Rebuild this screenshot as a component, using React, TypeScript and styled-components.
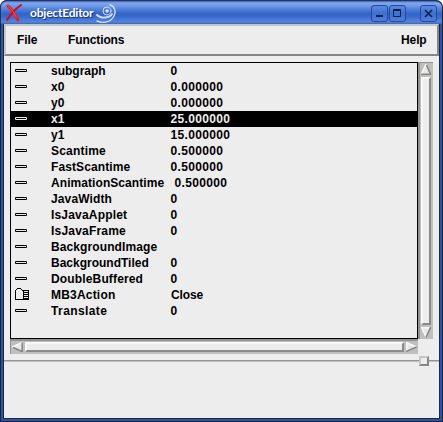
import React from 'react';
import styled, { createGlobalStyle } from 'styled-components';

const Global = createGlobalStyle`
  * { box-sizing: border-box; }
  body { margin: 0; background: #fff; overflow: hidden; }
  svg { display: block; flex: none; }
`;

const Frame = styled.div`
  width: 443px;
  height: 422px;
  display: flex;
  flex-direction: column;
  padding: 0 1px 1px 0;
  border-radius: 7px 7px 0 0;
  background: #20242c;
  font: bold 12px/16px 'Liberation Sans', Arial, sans-serif;
  color: #000;
`;

const TitleBar = styled.header`
  height: 24px;
  flex: none;
  display: flex;
  align-items: center;
  padding: 1px 5px 0 5px;
  border-top: 1px solid #23345c;
  border-left: 1px solid #23345c;
  border-radius: 7px 7px 0 0;
  background: linear-gradient(#3a62b4 0, #82a8ee 2px, #6e98e6 5px, #4a7bd6 9px, #3464c4 13px, #3a6ccc 16px, #5585dc 21px, #3564bc 23px);
`;

const Title = styled.span`
  flex: none;
  width: 66px;
  margin-left: 7px;
  font: bold 12px/20px Lato, sans-serif;
  letter-spacing: -0.2px;
  white-space: nowrap;
  color: #fff;
  text-shadow: 1px 1px 1px #12306c;
`;

const Controls = styled.div`
  display: flex;
  margin-left: auto;
  gap: 1px;
`;

const TitleButton = styled.button<{ $apart?: boolean }>`
  width: 17px;
  height: 17px;
  padding: 0;
  margin-left: ${(p) => (p.$apart ? 13 : 0)}px;
  border: 1px solid #2449a0;
  border-radius: 3px;
  background: linear-gradient(#5b8ae0, #3f6fce 50%, #4d80da);
`;

const Body = styled.main`
  flex: 1;
  display: flex;
  flex-direction: column;
  margin: 0 2px 2px 3px;
  border: solid #282828;
  border-width: 0 1px 1px 1px;
  background: #ededed;
  outline: 2px solid #2454b8;
  clip-path: inset(0 -2px -2px -2px);
`;

const MenuBar = styled.nav`
  height: 32px;
  flex: none;
  display: flex;
  align-items: center;
  padding: 0 10px 0 11px;
  border: 2px solid;
  border-color: #c6c6c6 #868686 #868686 #c6c6c6;
`;

const Text = styled.span<{ $w: number; $sp?: number }>`
  flex: none;
  width: ${(p) => p.$w}px;
  white-space: pre;
  letter-spacing: ${(p) => p.$sp ?? 0}px;
`;

const Spacer = styled.span`
  flex: 1;
`;

const Viewer = styled.section`
  display: grid;
  grid-template: 277px 15px / 408px 15px;
  margin: 6px 0 0 6px;
`;

const List = styled.div`
  border: 1px solid #000;
`;

const Row = styled.div<{ $selected?: boolean }>`
  height: 16px;
  display: flex;
  align-items: center;
  padding-left: 4px;
  background: ${(p) => (p.$selected ? '#000' : 'transparent')};
  color: ${(p) => (p.$selected ? '#ededed' : '#000')};
`;

const IconCell = styled.span`
  width: 36px;
  flex: none;
`;

const Track = styled.div<{ $vertical?: boolean }>`
  display: flex;
  flex-direction: ${(p) => (p.$vertical ? 'column' : 'row')};
  gap: 2px;
  padding: ${(p) => (p.$vertical ? '1px 2px 1px 1px' : '1px 1px 2px 1px')};
  border: 0 solid #929292;
  border-width: ${(p) => (p.$vertical ? '1px 0 0 2px' : '2px 0 0 1px')};
  background: #bfc0bd;
`;

const Thumb = styled.div`
  flex: 1;
  border: 2px solid;
  border-color: #f8f8f8 #8a8a8a #8a8a8a #f8f8f8;
  background: #ededed;
`;

const SashRow = styled.div`
  height: 10px;
  flex: none;
  display: flex;
  align-items: center;
  margin-top: 2px;
`;

const Rule = styled.div<{ $w?: number }>`
  height: 2px;
  flex: ${(p) => (p.$w ? `0 0 ${p.$w}px` : '1')};
  border-top: 1px solid #949494;
  border-bottom: 1px solid #c0c0c0;
`;

const Sash = styled.div`
  width: 10px;
  height: 10px;
  border: 2px solid;
  border-color: #c6c6c6 #868686 #868686 #c6c6c6;
`;

interface Property {
  name: string;
  value: string;
  spacing?: number;
  shift?: number;
}

const properties: Property[] = [
  { name: 'subgraph', value: '0' },
  { name: 'x0', value: '0.000000' },
  { name: 'y0', value: '0.000000' },
  { name: 'x1', value: '25.000000' },
  { name: 'y1', value: '15.000000' },
  { name: 'Scantime', value: '0.500000', spacing: 0.2 },
  { name: 'FastScantime', value: '0.500000', spacing: 0.1 },
  { name: 'AnimationScantime', value: '0.500000', spacing: 0.07, shift: 4 },
  { name: 'JavaWidth', value: '0', spacing: 0.12 },
  { name: 'IsJavaApplet', value: '0', spacing: 0.18 },
  { name: 'IsJavaFrame', value: '0', spacing: 0.2 },
  { name: 'BackgroundImage', value: '', spacing: 0.1 },
  { name: 'BackgroundTiled', value: '0' },
  { name: 'DoubleBuffered', value: '0', spacing: 0.15 },
  { name: 'MB3Action', value: 'Close', spacing: 0.2, shift: 0.5 },
  { name: 'Translate', value: '0', spacing: 0.4 },
];

const Dash = () => (
  <svg width="13" height="16" fill="none" stroke="currentColor">
    <path d="M.5 6.5h11v2H.5z" />
  </svg>
);

const Folder = () => (
  <svg width="15" height="16" fill="none" stroke="currentColor" shapeRendering="crispEdges">
    <path d="M.5 12.500V3.500L2.500 1.500H5.500L7.500 3.500H13.500V12.500H.5M8.500 3.500V12.500M9 5.500h4M9 7.500h4M9 9.500h4M9 11.500h4" />
  </svg>
);

const arrows = {
  up: ['M5 0L10 11H0z', 'M5.500 1L9.500 10.200H0', 'M5 0L.5 10'],
  down: ['M0 0H10L5 11z', 'M9.700 0L5 10.500', 'M5 10L.7.700H9.500'],
  left: ['M0 5L11 0V10z', 'M10.200 .5V9.500L1 5.500', 'M0 5L10 .5'],
  right: ['M0 0L11 5L0 10z', 'M10.500 5L0 9.500', 'M.7 9V.7L10 4.700'],
};

const Arrow = ({ dir }: { dir: keyof typeof arrows }) => {
  const upright = dir === 'up' || dir === 'down';
  const [face, dark, light] = arrows[dir];
  return (
    <svg width={upright ? 10 : 11} height={upright ? 11 : 10} fill="none" strokeWidth="1.500">
      <path d={face} fill="#e6e6e6" />
      <path d={light} stroke="#f8f8f8" />
      <path d={dark} stroke="#858585" />
    </svg>
  );
};

export default function App() {
  return (
    <>
      <Global />
      <Frame>
        <TitleBar>
          <svg width="17" height="18" fill="none" strokeLinecap="round">
            <path d="M2 2C6 5 9 11 12 16" stroke="#ec1c24" strokeWidth="3" />
            <path d="M15 1C9 5 5 10 1 16" stroke="#d90812" strokeWidth="2" />
            <path d="M2 2C6 5 8 9 10 13" stroke="#ff6666" strokeWidth=".7" />
          </svg>
          <Title>objectEditor</Title>
          <svg width="22" height="22" fill="none" stroke="#d3def5" strokeLinecap="round">
            <path d="M14 3C19 4 20 10 18 14C15 20 7 22 1 19" strokeWidth="1.400" />
            <path d="M1 13C5 17 14 16 16 12" strokeWidth="1.800" />
            <circle cx="11" cy="9" r="4" strokeWidth="1" />
            <circle cx="11" cy="9" r="1.300" fill="#d3def5" />
          </svg>
          <Controls>
            <TitleButton aria-label="Minimize">
              <svg width="15" height="15"><path d="M4 9h7v2H4z" fill="#091f4d" /></svg>
            </TitleButton>
            <TitleButton aria-label="Maximize">
              <svg width="15" height="15" fill="none" stroke="#091f4d"><path d="M3.500 3.500h7v7h-7zM3 4.500h8" /></svg>
            </TitleButton>
            <TitleButton aria-label="Close" $apart>
              <svg width="15" height="15"><path d="M4 4L11 11M11 4L4 11" stroke="#091f4d" strokeWidth="1.600" /></svg>
            </TitleButton>
          </Controls>
        </TitleBar>
        <Body>
          <MenuBar>
            <Text $w={51} $sp={-0.1}>File</Text>
            <Text $w={60} $sp={-0.1}>Functions</Text>
            <Spacer />
            <Text $w={26} $sp={-0.1}>Help</Text>
          </MenuBar>
          <Viewer>
            <List>
              {properties.map(({ name, value, spacing = 0, shift = 0 }) => (
                <Row key={name} $selected={name === 'x1'}>
                  <IconCell>{name === 'MB3Action' ? <Folder /> : <Dash />}</IconCell>
                  <Text $w={119.5 + shift} $sp={spacing}>{name}</Text>
                  <Text $w={70} $sp={value === 'Close' ? -0.1 : 0.35}>{value}</Text>
                </Row>
              ))}
            </List>
            <Track $vertical>
              <Arrow dir="up" /><Thumb /><Arrow dir="down" />
            </Track>
            <Track>
              <Arrow dir="left" /><Thumb /><Arrow dir="right" />
            </Track>
          </Viewer>
          <SashRow>
            <Rule $w={415} /><Sash /><Rule />
          </SashRow>
        </Body>
      </Frame>
    </>
  );
}
